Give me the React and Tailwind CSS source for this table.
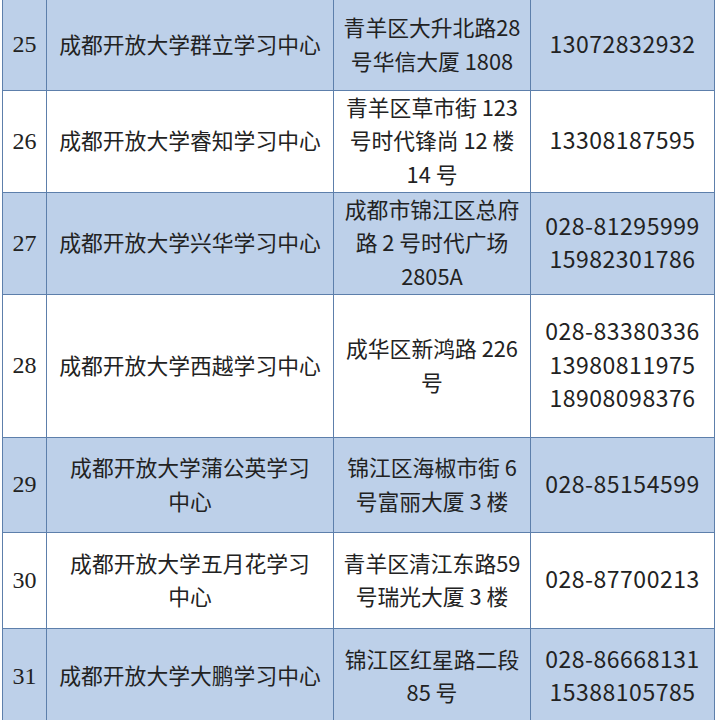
const rows = [
  { n: "25", name: ["成都开放大学群立学习中心"], addr: ["青羊区大升北路28", "号华信大厦 1808"], tel: ["13072832932"], h: "h-[91px]", blue: true },
  { n: "26", name: ["成都开放大学睿知学习中心"], addr: ["青羊区草市街 123", "号时代锋尚 12 楼", "14 号"], tel: ["13308187595"], h: "h-[102px]", blue: false },
  { n: "27", name: ["成都开放大学兴华学习中心"], addr: ["成都市锦江区总府", "路 2 号时代广场", "2805A"], tel: ["028-81295999", "15982301786"], h: "h-[102px]", blue: true },
  { n: "28", name: ["成都开放大学西越学习中心"], addr: ["成华区新鸿路 226", "号"], tel: ["028-83380336", "13980811975", "18908098376"], h: "h-[143px]", blue: false },
  { n: "29", name: ["成都开放大学蒲公英学习", "中心"], addr: ["锦江区海椒市街 6", "号富丽大厦 3 楼"], tel: ["028-85154599"], h: "h-[95px]", blue: true },
  { n: "30", name: ["成都开放大学五月花学习", "中心"], addr: ["青羊区清江东路59", "号瑞光大厦 3 楼"], tel: ["028-87700213"], h: "h-[96px]", blue: false },
  { n: "31", name: ["成都开放大学大鹏学习中心"], addr: ["锦江区红星路二段", "85 号"], tel: ["028-86668131", "15388105785"], h: "h-[96px]", blue: true },
];

const cjk = { fontFamily: '"Noto Sans CJK SC", "Noto Sans", sans-serif' };

function Lines({ lines, className }) {
  return (
    <div className={className} style={cjk}>
      {lines.map((l, i) => (
        <div key={i} className="whitespace-pre">{l}</div>
      ))}
    </div>
  );
}

export default function App() {
  return (
    <div className="w-[717px] h-[720px] overflow-hidden bg-white">
      <div className="ml-[2px] w-[712px] border-l border-[#5d7fab] text-[#222222]">
        {rows.map((r) => (
          <div key={r.n} className={`flex ${r.h} ${r.blue ? "bg-[#bdd0e9]" : "bg-white"}`}>
            <div
              className="w-[44px] shrink-0 flex items-center justify-center border-r border-b border-[#5d7fab] text-[24px] pb-[2px]"
              style={{ fontFamily: '"Liberation Serif", "Times New Roman", serif' }}
            >
              {r.n}
            </div>
            <div className="w-[287px] shrink-0 flex items-center justify-center border-r border-b border-[#5d7fab] pb-[3px]">
              <Lines lines={r.name} className="text-center text-[21.8px] leading-[33.5px]" />
            </div>
            <div className="w-[197px] shrink-0 flex items-center justify-center border-r border-b border-[#5d7fab] pb-[3px]">
              <Lines lines={r.addr} className="text-center text-[21.8px] leading-[33.5px]" />
            </div>
            <div className="w-[184px] shrink-0 flex items-center justify-center border-r border-b border-[#5d7fab] pb-[3px]">
              <Lines lines={r.tel} className="text-center text-[23px] tracking-[0.5px] leading-[33.5px]" />
            </div>
          </div>
        ))}
      </div>
    </div>
  );
}
